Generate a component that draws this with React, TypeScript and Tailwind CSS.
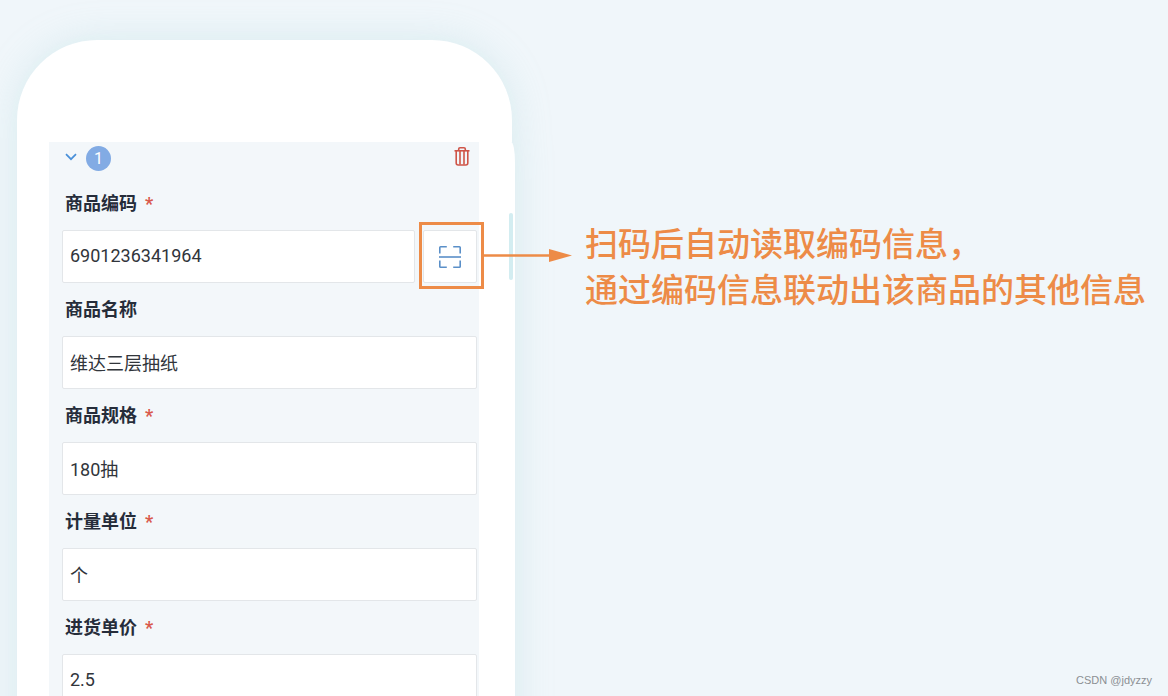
import { useState } from "react";

interface Field {
  id: string;
  label: string;
  value: string;
  required?: boolean;
  scannable?: boolean;
}

const initialFields: Field[] = [
  { id: "code", label: "商品编码", value: "6901236341964", required: true, scannable: true },
  { id: "name", label: "商品名称", value: "维达三层抽纸" },
  { id: "spec", label: "商品规格", value: "180抽", required: true },
  { id: "unit", label: "计量单位", value: "个", required: true },
  { id: "price", label: "进货单价", value: "2.5", required: true },
];

function ChevronIcon() {
  return (
    <svg width="12" height="12" viewBox="0 0 12 12" fill="none" stroke="#4a90d9" strokeWidth="1.7" aria-hidden="true">
      <path d="M1 1.2 6 6.2 11 1.2" />
    </svg>
  );
}

function TrashIcon() {
  return (
    <svg width="16" height="20" viewBox="0 0 16 20" fill="none" stroke="#cf5548" strokeWidth="1.6" aria-hidden="true">
      <path d="M0.5 4.8H15.5" />
      <path d="M4.7 4.6V3Q4.7 1.7 6 1.7H10Q11.3 1.7 11.3 3V4.6" />
      <path d="M2.2 4.8V17Q2.2 19 4.2 19H11.8Q13.8 19 13.8 17V4.8" />
      <path d="M6 4.8V18.4M10 4.8V18.4" />
    </svg>
  );
}

function ScanIcon() {
  return (
    <svg width="24" height="24" viewBox="0 0 24 24" fill="none" stroke="#5a8fc8" strokeWidth="1.6" aria-hidden="true">
      <path d="M1.8 8.5V2.6Q1.8 1.8 2.6 1.8H8.8" />
      <path d="M15.2 1.8H21.4Q22.2 1.8 22.2 2.6V8.5" />
      <path d="M1.8 15.5V21.4Q1.8 22.2 2.6 22.2H8.8" />
      <path d="M15.2 22.2H21.4Q22.2 22.2 22.2 21.4V15.5" />
      <path d="M1 12H23" />
    </svg>
  );
}

function Callout() {
  return (
    <span className="pointer-events-none absolute -top-[9px] -right-2 -bottom-[7px] -left-[5px] border-[3px] border-[#ed8b47]">
      <svg className="absolute top-6 left-full" width="92" height="14" viewBox="0 0 92 14" aria-hidden="true">
        <path d="M0 6.5H68" stroke="#ed8b47" strokeWidth="2.6" />
        <path d="M68 0.1 91 6.5 68 12.9Z" fill="#ed8b47" />
      </svg>
    </span>
  );
}

export default function App() {
  const [fields, setFields] = useState(initialFields);
  const [open, setOpen] = useState(true);

  const updateField = (id: string, value: string) => {
    setFields(fields.map((field) => (field.id === id ? { ...field, value } : field)));
  };

  return (
    <main className="relative flex h-screen items-start overflow-hidden bg-[#f0f6fa] pt-10 pl-[17px] font-['Roboto','Noto_Sans_CJK_SC',sans-serif] text-[#31353b]">
      <section className="relative w-full max-w-[498px] pt-[102px] pr-9 pb-10 pl-8">
        <div className="absolute inset-0 flex flex-col drop-shadow-[0_0_18px_rgba(150,208,212,0.28)]">
          <div className="mr-[3px] h-[102px] rounded-t-[80px] bg-white" />
          <div className="flex-1 rounded-tr-[4px_20px] bg-white" />
        </div>
        <div className="absolute top-[173px] right-0.5 h-[67px] w-1 rounded-full bg-[#d3edf1]" />

        <div className="relative bg-[#f3f7fa] pr-0.5 pl-[13px]">
          <div className="flex h-[35px] items-start justify-between pt-1 pr-[7px] pl-[3px]">
            <button
              type="button"
              aria-expanded={open}
              onClick={() => setOpen(!open)}
              className="flex items-center gap-[9px]"
            >
              <ChevronIcon />
              <span className="flex size-[25px] items-center justify-center rounded-full bg-[#82abe4] text-base leading-none text-white">
                1
              </span>
            </button>
            <button type="button" aria-label="删除">
              <TrashIcon />
            </button>
          </div>

          {open &&
            fields.map((field) => (
              <div key={field.id}>
                <label htmlFor={field.id} className="flex h-[53px] items-center gap-2 pl-[3px] text-lg font-bold text-[#262d3a]">
                  {field.label}
                  {field.required && <span className="text-[#d9594c]">*</span>}
                </label>
                <div className="flex gap-2">
                  <input
                    id={field.id}
                    value={field.value}
                    onChange={(event) => updateField(field.id, event.target.value)}
                    className="h-[53px] min-w-0 flex-1 rounded-xs border border-[#e3e6e9] bg-white px-[7px] pb-0.5 text-lg outline-none"
                  />
                  {field.scannable && (
                    <button
                      type="button"
                      aria-label="扫码"
                      className="relative flex w-[54px] items-center justify-center rounded-xs border border-[#e3e6e9] bg-white"
                    >
                      <ScanIcon />
                      <Callout />
                    </button>
                  )}
                </div>
              </div>
            ))}
        </div>
      </section>

      <p className="shrink-0 pt-[182px] pl-[70px] text-[33px] leading-[46px] font-medium text-[#ed8b47]">
        扫码后自动读取编码信息，
        <br />
        通过编码信息联动出该商品的其他信息
      </p>

      <span className="absolute right-4 bottom-2 font-['Liberation_Sans',sans-serif] text-[11px] leading-4 text-[#8b8f93]">
        CSDN @jdyzzy
      </span>
    </main>
  );
}
